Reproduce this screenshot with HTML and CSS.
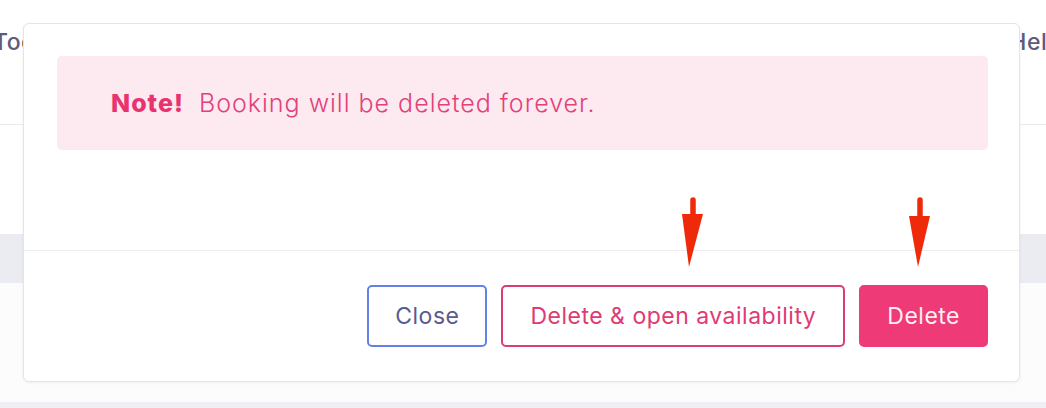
FILE: index.html
```html
<!DOCTYPE html>
<html lang="en">
<head>
<meta charset="utf-8">
<title>Delete booking</title>
<link rel="stylesheet" href="styles.css">
</head>
<body>
<div class="page">
  <header class="topbar">
    <span class="nav-item nav-left">Tools</span>
    <span class="nav-item nav-right">Help</span>
  </header>
  <div class="spacer"></div>
  <div class="band"></div>
  <div class="rows"></div>
  <div class="footer-band"></div>

  <div class="modal" role="dialog">
    <div class="modal-body">
      <div class="note">
        <strong class="note-label">Note!</strong>
        <span class="note-text">Booking will be deleted forever.</span>
      </div>
    </div>
    <div class="modal-footer">
      <button class="btn btn-close">Close</button>
      <button class="btn btn-outline-danger">Delete &amp; open availability</button>
      <button class="btn btn-danger">Delete</button>
    </div>
  </div>

  <svg class="arrow arrow-1" width="30" height="74" viewBox="0 0 30 74">
    <line x1="13" y1="4" x2="13" y2="20" stroke="#ee2a0a" stroke-width="5.5" stroke-linecap="round"/>
    <polygon points="2,18 23,18 9,71" fill="#ee2a0a"/>
  </svg>
  <svg class="arrow arrow-2" width="30" height="74" viewBox="0 0 30 74">
    <line x1="13" y1="4" x2="13" y2="21" stroke="#ee2a0a" stroke-width="5.5" stroke-linecap="round"/>
    <polygon points="2,20 23,20 11,71" fill="#ee2a0a"/>
  </svg>
</div>
</body>
</html>
```

FILE: styles.css
```css
* { box-sizing: border-box; }

html, body {
  margin: 0;
  padding: 0;
  background: #ffffff;
  overflow: hidden;
}

body {
  font-family: Inter, "Noto Sans", sans-serif;
}

.page {
  position: relative;
  width: 1046px;
  height: 408px;
  overflow: hidden;
  display: flex;
  flex-direction: column;
}

.topbar {
  height: 125px;
  flex: none;
  border-bottom: 1px solid #e9e9ee;
  display: flex;
  justify-content: space-between;
  align-items: flex-start;
  padding-top: 28px;
}

.nav-item {
  font-size: 23px;
  letter-spacing: 0.5px;
  color: #5d5c7e;
  font-weight: 500;
  white-space: nowrap;
}

.nav-left { margin-left: -7px; }
.nav-right { margin-right: -16px; }

.spacer { height: 109px; flex: none; }

.band {
  height: 49px;
  flex: none;
  background: #ebebf2;
}

.rows {
  flex: 1;
  background: #fcfcfd;
}

.footer-band {
  height: 6px;
  flex: none;
  background: #f0f0f4;
}

.modal {
  position: absolute;
  top: 23px;
  left: 23px;
  width: 997px;
  height: 359px;
  background: #ffffff;
  border: 1px solid #e4e4ea;
  border-radius: 6px;
  box-shadow: 0 1px 3px rgba(40, 40, 70, 0.06);
  display: flex;
  flex-direction: column;
}

.modal-body {
  height: 226px;
  flex: none;
  padding: 32px 31px 0 33px;
}

.note {
  height: 94px;
  background: #fde9f0;
  border-radius: 5px;
  display: flex;
  align-items: center;
  padding-left: 54px;
  font-size: 25px;
  letter-spacing: 1px;
  color: #e2417a;
}

.note-label {
  font-weight: 800;
  color: #e8336f;
  margin-right: 15px;
}

.note-text {
  font-weight: 300;
}

.modal-footer {
  flex: 1;
  border-top: 1px solid #ececf0;
  display: flex;
  justify-content: flex-end;
  align-items: flex-start;
  gap: 14px;
  padding: 34px 31px 0 0;
}

.btn {
  height: 62px;
  padding: 0 26px;
  border-radius: 5px;
  border: 2px solid transparent;
  background: #ffffff;
  font-family: inherit;
  font-size: 23px;
  letter-spacing: 0.5px;
  font-weight: 400;
  cursor: pointer;
}

.btn-close {
  border-color: #6282e6;
  color: #5c5a8e;
}

.btn-outline-danger {
  padding: 0 27px;
  border-color: #dc3c72;
  color: #e03a73;
}

.btn-danger {
  background: #ef3a78;
  border-color: #ef3a78;
  color: #fdeef4;
}

.arrow {
  position: absolute;
}

.arrow-1 { left: 680px; top: 196px; }
.arrow-2 { left: 907px; top: 196px; }
```
